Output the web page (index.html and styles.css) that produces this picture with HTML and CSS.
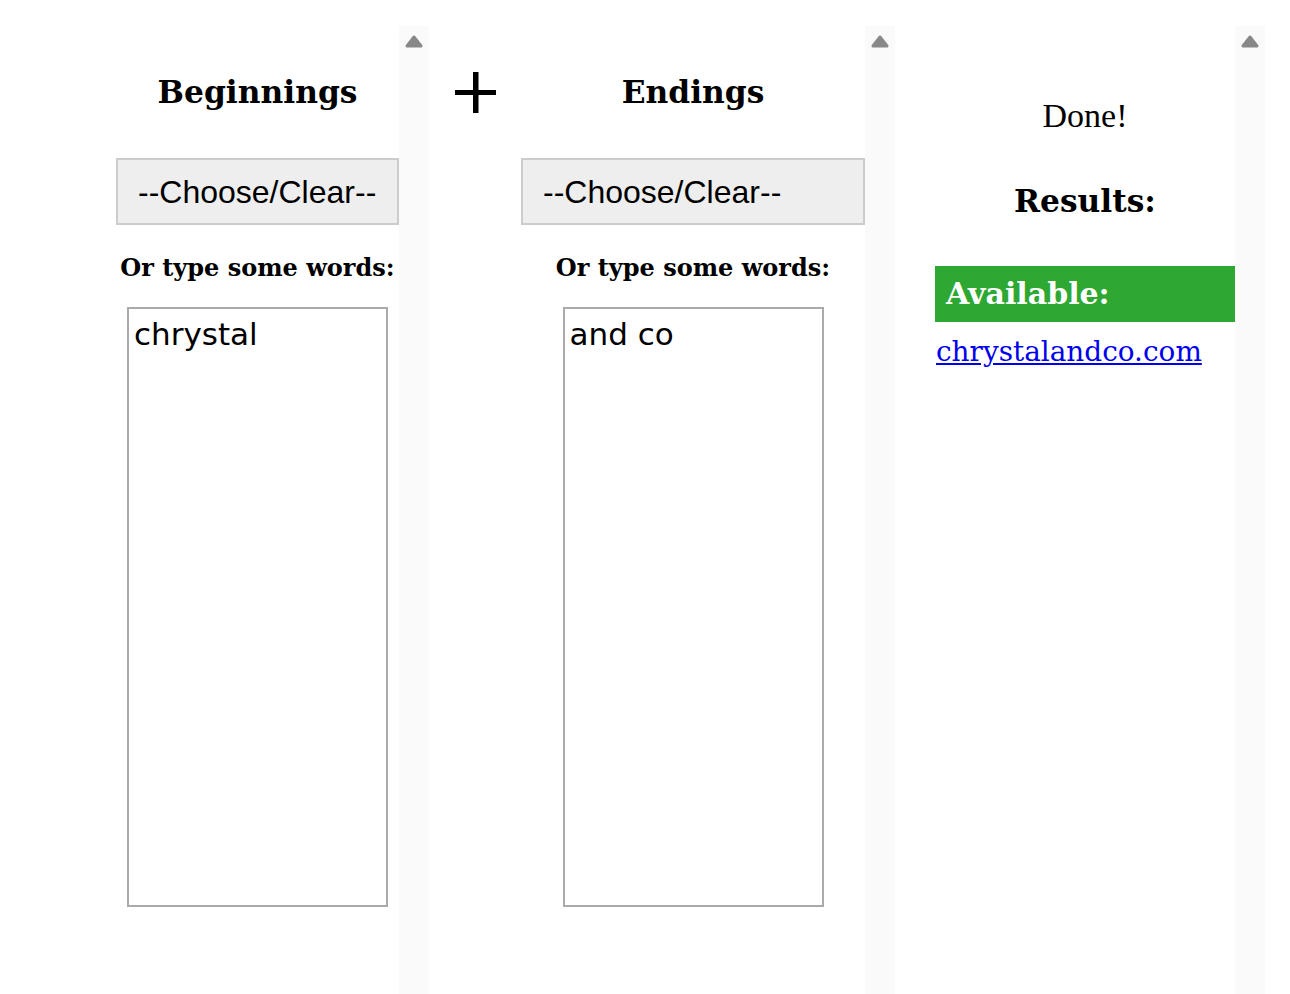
FILE: index.html
```
<!DOCTYPE html>
<html>
<head>
<meta charset="utf-8">
<link rel="stylesheet" href="styles.css">
</head>
<body>
<div class="app">
  <div class="col col-begin">
    <h1 class="heading">Beginnings</h1>
    <select class="chooser"><option>--Choose/Clear--</option></select>
    <p class="label">Or type some words:</p>
    <textarea class="words">chrystal</textarea>
  </div>
  <div class="scrollbar"><svg class="arrow" width="18" height="13" viewBox="0 0 18 13"><polygon points="9,2 16,11 2,11" fill="#888" stroke="#888" stroke-width="3" stroke-linejoin="round"/></svg></div>
  <div class="plus-col">
    <svg class="plus" width="42" height="42" viewBox="0 0 42 42"><rect x="0" y="18" width="41" height="5" fill="#000"/><rect x="18" y="0" width="5.5" height="41" fill="#000"/></svg>
  </div>
  <div class="col col-end">
    <h1 class="heading">Endings</h1>
    <select class="chooser"><option>--Choose/Clear--</option></select>
    <p class="label">Or type some words:</p>
    <textarea class="words">and co</textarea>
  </div>
  <div class="scrollbar"><svg class="arrow" width="18" height="13" viewBox="0 0 18 13"><polygon points="9,2 16,11 2,11" fill="#888" stroke="#888" stroke-width="3" stroke-linejoin="round"/></svg></div>
  <div class="col col-results">
    <p class="done">Done!</p>
    <h2 class="heading results">Results:</h2>
    <div class="available">Available:</div>
    <a class="domain" href="#">chrystalandco.com</a>
  </div>
  <div class="scrollbar"><svg class="arrow" width="18" height="13" viewBox="0 0 18 13"><polygon points="9,2 16,11 2,11" fill="#888" stroke="#888" stroke-width="3" stroke-linejoin="round"/></svg></div>
</div>
</body>
</html>
```
FILE: styles.css
```
html, body {
  margin: 0;
  padding: 0;
  background: #fff;
  overflow: hidden;
}
.app {
  display: flex;
  align-items: stretch;
  padding: 26px 0 0 116px;
  height: 994px;
  box-sizing: border-box;
  font-family: "DejaVu Serif", serif;
  color: #000;
}
.col {
  display: flex;
  flex-direction: column;
  align-items: center;
}
.col-begin { width: 283px; }
.col-end { width: 344px; }
.col-results {
  width: 300px;
  padding-left: 40px;
}
.scrollbar {
  width: 30px;
  background: #fafafa;
  display: flex;
  justify-content: center;
  align-items: flex-start;
}
.arrow {
  margin-top: 9px;
}
.plus-col {
  width: 92px;
  display: flex;
  justify-content: center;
  align-items: flex-start;
}
.plus {
  margin-top: 46px;
  margin-left: 2px;
}
.heading {
  font-family: "DejaVu Serif", serif;
  font-weight: bold;
  font-size: 31.3px;
  line-height: 40px;
  margin: 46px 0 0 0;
}
.chooser {
  appearance: none;
  -webkit-appearance: none;
  margin-top: 46px;
  width: 100%;
  height: 67px;
  box-sizing: border-box;
  border: 2px solid #ccc;
  border-radius: 0;
  background: #eee;
  font-family: "Liberation Sans", Arial, sans-serif;
  font-size: 32px;
  color: #000;
  padding: 0 20px;
}
.label {
  margin: 28px 0 0 0;
  font-family: "DejaVu Serif", serif;
  font-weight: bold;
  font-size: 24px;
  line-height: 30px;
}
.words {
  margin-top: 24px;
  width: 261px;
  height: 600px;
  box-sizing: border-box;
  border: 2px solid #aaa;
  padding: 7px 5px 5px 5px;
  font-family: "DejaVu Sans", Verdana, sans-serif;
  font-size: 31px;
  resize: none;
  outline: none;
}
.done {
  margin: 72px 0 0 0;
  font-family: "Liberation Serif", "Times New Roman", serif;
  font-size: 34px;
  line-height: 36px;
}
.results {
  margin-top: 47px;
}
.available {
  margin-top: 45px;
  align-self: stretch;
  height: 56px;
  line-height: 56px;
  background: #2ea832;
  color: #fff;
  font-weight: bold;
  font-size: 30px;
  padding-left: 11px;
}
.domain {
  align-self: flex-start;
  margin-top: 12px;
  padding-left: 1px;
  font-family: "DejaVu Serif", serif;
  font-size: 27.9px;
  line-height: 36px;
  color: #0000ee;
}
```
